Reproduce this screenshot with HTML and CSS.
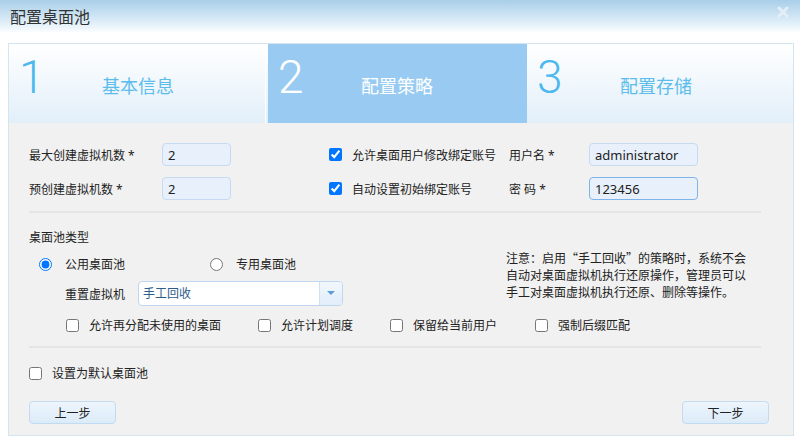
FILE: index.html
```html
<!DOCTYPE html>
<html lang="zh-CN">
<head>
    <meta charset="UTF-8">
    <title>配置桌面池</title>
    <link rel="stylesheet" href="styles.css">
</head>
<body>
    <div class="titlebar">
        <span class="title">配置桌面池</span>
        <svg class="close" width="12" height="12" viewBox="0 0 12 12">
            <path d="M2 2 L10 10 M10 2 L2 10" stroke="#e3eef7" stroke-width="3" stroke-linecap="round"/>
        </svg>
    </div>

    <div class="dialog">
        <div class="steps">
            <div class="step step-first">
                <span class="step-num">1</span>
                <span class="step-name">基本信息</span>
            </div>
            <div class="step active">
                <span class="step-num">2</span>
                <span class="step-name">配置策略</span>
            </div>
            <div class="step step-last">
                <span class="step-num">3</span>
                <span class="step-name">配置存储</span>
            </div>
        </div>

        <div class="content">
            <div class="form-row">
                <span class="field-label">最大创建虚拟机数 *</span>
                <input class="text-input" type="text" value="2">
                <label class="check-field">
                    <input type="checkbox" checked>
                    <span>允许桌面用户修改绑定账号</span>
                </label>
                <span class="user-label">用户名 *</span>
                <input class="text-input wide" type="text" value="administrator">
            </div>
            <div class="form-row">
                <span class="field-label">预创建虚拟机数 *</span>
                <input class="text-input" type="text" value="2">
                <label class="check-field">
                    <input type="checkbox" checked>
                    <span>自动设置初始绑定账号</span>
                </label>
                <span class="user-label">密 码 *</span>
                <input class="text-input wide focused" type="text" value="123456">
            </div>

            <div class="separator"></div>

            <div class="type-title">桌面池类型</div>
            <div class="type-main">
                <div class="type-left">
                    <div class="radio-row">
                        <label class="radio-field">
                            <input type="radio" name="pool" checked>
                            <span>公用桌面池</span>
                        </label>
                        <label class="radio-field second">
                            <input type="radio" name="pool">
                            <span>专用桌面池</span>
                        </label>
                    </div>
                    <div class="select-row">
                        <span class="select-label">重置虚拟机</span>
                        <div class="combo">
                            <span class="combo-text">手工回收</span>
                            <span class="combo-arrow"></span>
                        </div>
                    </div>
                </div>
                <div class="note">
                    <div>注意：启用<span class="q">“</span>手工回收<span class="q">”</span>的策略时，系统不会</div>
                    <div>自动对桌面虚拟机执行还原操作，管理员可以</div>
                    <div>手工对桌面虚拟机执行还原、删除等操作。</div>
                </div>
            </div>
            <div class="option-row">
                <label class="opt opt-1"><input type="checkbox"><span>允许再分配未使用的桌面</span></label>
                <label class="opt opt-2"><input type="checkbox"><span>允许计划调度</span></label>
                <label class="opt opt-3"><input type="checkbox"><span>保留给当前用户</span></label>
                <label class="opt"><input type="checkbox"><span>强制后缀匹配</span></label>
            </div>

            <div class="separator second"></div>

            <label class="default-row">
                <input type="checkbox">
                <span>设置为默认桌面池</span>
            </label>

            <div class="buttons">
                <button class="btn">上一步</button>
                <button class="btn">下一步</button>
            </div>
        </div>
    </div>
</body>
</html>
```

FILE: styles.css
```css
body {
    margin: 0;
    background-color: #fff;
    font-family: "Noto Sans", "Noto Sans CJK SC", sans-serif;
    font-size: 12px;
    color: #222;
    width: 800px;
    height: 440px;
    overflow: hidden;
}
.titlebar {
    height: 33px;
    display: flex;
    align-items: center;
    justify-content: space-between;
    padding: 0 11px 0 10px;
    background: linear-gradient(#a9cfe9, #d8eaf6 60%, #fdfeff);
}
.title {
    font-family: "Noto Sans CJK SC", sans-serif;
    font-size: 16px;
    color: #333;
    margin-top: -2px;
}
.close {
    margin-top: -10px;
}
.dialog {
    margin: 10px 6px 0 8px;
    border: 1px solid #d3e5f1;
    background-color: #f1f1f1;
}
.steps {
    display: flex;
    height: 79px;
}
.step {
    display: flex;
    align-items: flex-start;
    width: 259px;
    background: linear-gradient(#ffffff, #e2eff9);
    position: relative;
}
.step-last {
    flex: 1;
}
.step-first::after {
    content: '';
    position: absolute;
    right: 2px;
    top: 10px;
    bottom: 0;
    width: 1px;
    background-color: #fff;
}
.step.active {
    background: #99cbf2;
}
.step-num {
    width: 80px;
    padding-left: 10px;
    font-family: Roboto, "Open Sans", sans-serif;
    font-weight: 300;
    font-size: 46px;
    line-height: 46px;
    margin-top: 10px;
    color: #4bb8ef;
}
.step-name {
    font-family: "Noto Sans CJK SC", sans-serif;
    font-size: 18px;
    line-height: 22px;
    margin-top: 30px;
    margin-left: 3px;
    color: #5cbdec;
}
.step.active .step-num,
.step.active .step-name {
    color: #fff;
}
.content {
    padding: 20px 32px 11px 20px;
}
.form-row {
    display: flex;
    align-items: center;
    height: 23px;
    margin-bottom: 11px;
}
.field-label {
    width: 133px;
}
.text-input {
    box-sizing: border-box;
    width: 69px;
    height: 23px;
    padding: 0 5px;
    border: 1px solid #c6dbf1;
    border-radius: 4px;
    background-color: #e8f0fb;
    font-family: "Noto Sans", sans-serif;
    font-size: 13px;
    color: #222;
    outline: none;
}
.text-input.wide {
    width: 109px;
}
.text-input.focused {
    border-color: #7eb4e8;
}
input[type="checkbox"],
input[type="radio"] {
    width: 13px;
    height: 13px;
    margin: 0;
}
.check-field {
    display: flex;
    align-items: center;
    width: 180px;
    margin-left: 98px;
    gap: 10px;
}
.user-label {
    width: 80px;
}
.separator {
    height: 2px;
    background-color: #e5e5e5;
}
.type-title {
    margin-top: 17px;
    line-height: 16px;
}
.type-main {
    display: flex;
}
.type-left {
    width: 477px;
}
.radio-row {
    display: flex;
    align-items: center;
    height: 20px;
    margin-top: 8px;
    padding-left: 10px;
}
.radio-field {
    display: flex;
    align-items: center;
    gap: 13px;
    width: 171px;
}
.select-row {
    display: flex;
    align-items: center;
    margin-top: 7px;
    padding-left: 36px;
}
.select-label {
    width: 73px;
}
.combo {
    display: flex;
    box-sizing: border-box;
    width: 205px;
    height: 25px;
    border: 1px solid #bfd7ee;
    border-radius: 4px;
    background-color: #fff;
    overflow: hidden;
}
.combo-text {
    flex: 1;
    line-height: 23px;
    padding-left: 4px;
    color: #2d5b8a;
}
.combo-arrow {
    width: 22px;
    border-left: 1px solid #cfe1f2;
    background: linear-gradient(#f2f7fd, #e1edf9);
    position: relative;
}
.combo-arrow::after {
    content: '';
    position: absolute;
    left: 7px;
    top: 9px;
    border: 4px solid transparent;
    border-top: 4px solid #5c9bd6;
}
.note {
    margin-top: 3px;
    line-height: 17px;
    white-space: nowrap;
}
.note .q {
    font-family: "Noto Sans CJK SC", sans-serif;
    font-variant-east-asian: full-width;
}
.option-row {
    display: flex;
    align-items: center;
    height: 18px;
    margin-top: 10px;
    padding-left: 37px;
}
.opt {
    display: flex;
    align-items: center;
    gap: 10px;
}
.opt-1 { width: 192px; }
.opt-2 { width: 132px; }
.opt-3 { width: 145px; }
.separator.second {
    margin-top: 12px;
}
.default-row {
    display: flex;
    align-items: center;
    gap: 10px;
    height: 18px;
    margin-top: 16px;
}
.buttons {
    display: flex;
    justify-content: space-between;
    margin-top: 19px;
    margin-right: -8px;
}
.btn {
    width: 87px;
    height: 23px;
    padding: 0;
    border: 1px solid #c3dbf1;
    border-radius: 4px;
    background: linear-gradient(#edf5fd, #dcebf8);
    font-family: "Noto Sans CJK SC", sans-serif;
    font-size: 12px;
    color: #222;
}
```
